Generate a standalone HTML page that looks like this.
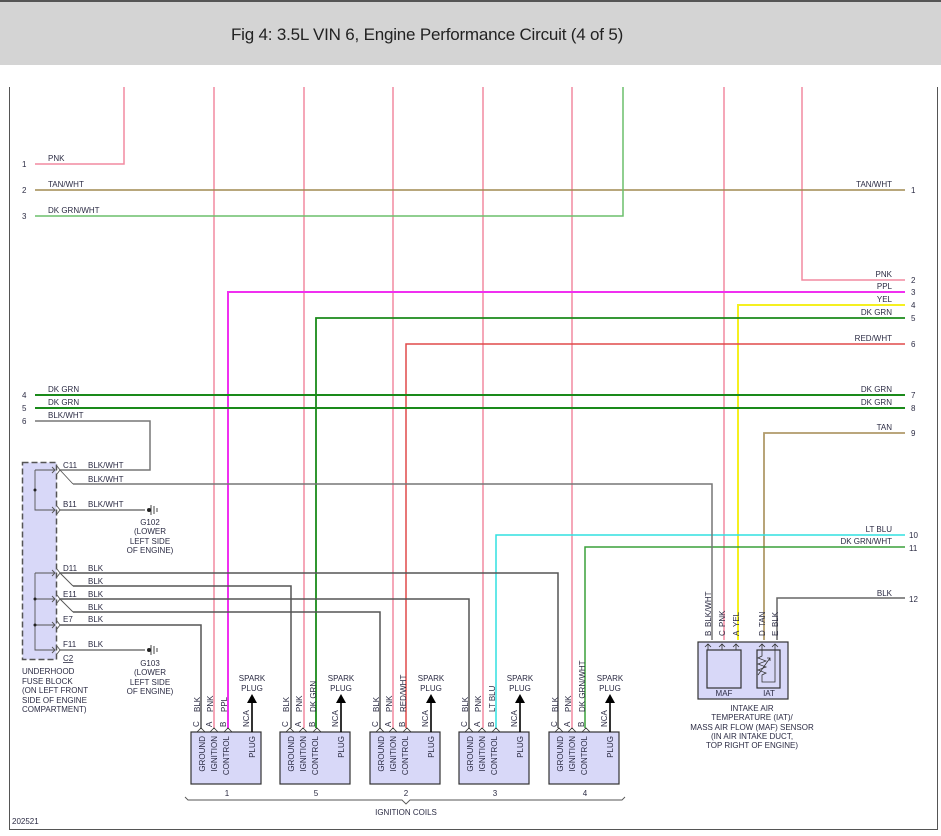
<!DOCTYPE html>
<html><head><meta charset="utf-8"><style>
html,body{margin:0;padding:0;background:#fff;}
body{width:941px;height:836px;overflow:hidden;position:relative;font-family:"Liberation Sans",sans-serif;}
.hdr{position:absolute;left:0;top:0;width:941px;height:65px;background:#d4d4d4;border-top:2px solid #555;box-sizing:border-box;}
.hdr span{position:absolute;left:231px;top:23px;font-size:17px;color:#222;letter-spacing:-0.2px;}
svg{position:absolute;left:0;top:0;}
text{font-family:"Liberation Sans",sans-serif;font-size:8px;fill:#2c2c44;}
</style></head><body>
<div class="hdr"><span>Fig 4: 3.5L VIN 6, Engine Performance Circuit (4 of 5)</span></div>
<svg width="941" height="836" viewBox="0 0 941 836">
<defs>
<g id="coil">
 <rect x="0" y="732" width="70" height="52" fill="#d8d8f8" stroke="#333" stroke-width="1.2"/>
 <path d="M6 732 l4 -4 4 4 M19 732 l4 -4 4 4 M33 732 l4 -4 4 4" fill="none" stroke="#333" stroke-width="0.8"/>
 <text transform="translate(14,736) rotate(-90)" text-anchor="end">GROUND</text>
 <text transform="translate(26,736) rotate(-90)" text-anchor="end">IGNITION</text>
 <text transform="translate(38,736) rotate(-90)" text-anchor="end">CONTROL</text>
 <text transform="translate(64,736) rotate(-90)" text-anchor="end">PLUG</text>
 <text transform="translate(8,727) rotate(-90)" text-anchor="start">C</text>
 <text transform="translate(21,727) rotate(-90)" text-anchor="start">A</text>
 <text transform="translate(35,727) rotate(-90)" text-anchor="start">B</text>
 <text transform="translate(58,727) rotate(-90)" text-anchor="start">NCA</text>
 <line x1="61" y1="732" x2="61" y2="702" stroke="#000" stroke-width="1.6"/>
 <path d="M56 703 L61 694 L66 703 Z" fill="#000"/>
 <text x="61" y="681" text-anchor="middle">SPARK</text>
 <text x="61" y="691" text-anchor="middle">PLUG</text>
</g>
</defs>
<!-- border -->
<path d="M9.5 87 V829.5 H937.5 V87" fill="none" stroke="#555" stroke-width="1"/>
<!-- wire numbers left -->
<g>
<text x="22" y="167">1</text><text x="22" y="193">2</text><text x="22" y="219">3</text>
<text x="22" y="398">4</text><text x="22" y="411">5</text><text x="22" y="424">6</text>
<text x="911" y="193">1</text><text x="911" y="283">2</text><text x="911" y="295">3</text>
<text x="911" y="308">4</text><text x="911" y="321">5</text><text x="911" y="347">6</text>
<text x="911" y="398">7</text><text x="911" y="411">8</text><text x="911" y="436">9</text>
<text x="909" y="538">10</text><text x="909" y="551">11</text><text x="909" y="602">12</text>
</g>
<g fill="none" stroke-width="1.5">
<!-- pink verticals -->
<path d="M35 164 H124 V87" stroke="#f28aa0"/>
<path d="M214 87 V728 M304 87 V728 M393 87 V728 M483 87 V728 M572 87 V728 M724 87 V640" stroke="#f28aa0"/>
<path d="M802 87 V280 H905" stroke="#f28aa0"/>
<path d="M35 190 H905" stroke="#a08a50"/>
<path d="M35 216 H623 V87" stroke="#6cbf6c"/>
<path d="M228 728 V292 H905" stroke="#f030f0" stroke-width="2"/>
<path d="M738 640 V305 H905" stroke="#f5f020" stroke-width="2"/>
<path d="M316 728 V318 H905" stroke="#1a8a1a" stroke-width="1.8"/>
<path d="M406 728 V344 H905" stroke="#e04a4a"/>
<path d="M35 395 H905 M35 408 H905" stroke="#1a8a1a" stroke-width="2"/>
<path d="M35 421 H150 V470 H60" stroke="#777"/>
<path d="M764 640 V433 H905" stroke="#b09a6a" stroke-width="1.8"/>
<path d="M496 728 V535 H905" stroke="#30e0e0"/>
<path d="M585 728 V547 H905" stroke="#3aa03a"/>
<path d="M777 640 V598 H905" stroke="#666"/>
<path d="M73 484 H712 V640" stroke="#777"/>
<path d="M60 510 H145" stroke="#777"/>
<path d="M60 573 H558 V728" stroke="#555"/>
<path d="M73 586 H291 V728" stroke="#555"/>
<path d="M60 599 H469 V728" stroke="#555"/>
<path d="M73 612 H380 V728" stroke="#555"/>
<path d="M60 625 H201 V728" stroke="#555"/>
<path d="M60 650 H145" stroke="#777"/>
</g>
<!-- wire labels -->
<g>
<text x="48" y="161">PNK</text><text x="48" y="187">TAN/WHT</text><text x="48" y="213">DK GRN/WHT</text>
<text x="48" y="392">DK GRN</text><text x="48" y="405">DK GRN</text><text x="48" y="418">BLK/WHT</text>
<g text-anchor="end">
<text x="892" y="187">TAN/WHT</text><text x="892" y="277">PNK</text><text x="892" y="289">PPL</text>
<text x="892" y="302">YEL</text><text x="892" y="315">DK GRN</text><text x="892" y="341">RED/WHT</text>
<text x="892" y="392">DK GRN</text><text x="892" y="405">DK GRN</text><text x="892" y="430">TAN</text>
<text x="892" y="532">LT BLU</text><text x="892" y="544">DK GRN/WHT</text><text x="892" y="596">BLK</text>
</g>
</g>
<!-- fuse block -->
<rect x="22.5" y="462.5" width="34" height="197" fill="#d8d8f8" stroke="#555" stroke-width="1.5" stroke-dasharray="6,3"/>
<g fill="none" stroke="#555" stroke-width="0.9">
<path d="M35 470 H55 M35 470 V510 H55 M35 573 V650 H55 M35 573 H55 M35 599 H55 M35 625 H55"/>
<path d="M52 467 l3 3 -3 3 M52 507 l3 3 -3 3 M52 570 l3 3 -3 3 M52 596 l3 3 -3 3 M52 622 l3 3 -3 3 M52 647 l3 3 -3 3"/>
<path d="M57 466 l3 4 -3 4 M57 506 l3 4 -3 4 M57 569 l3 4 -3 4 M57 595 l3 4 -3 4 M57 621 l3 4 -3 4 M57 646 l3 4 -3 4"/>
<path d="M60 470 L73 484 M60 573 L73 586 M60 599 L73 612"/>
</g>
<circle cx="35" cy="490" r="1.5" fill="#222"/><circle cx="35" cy="599" r="1.5" fill="#222"/><circle cx="35" cy="625" r="1.5" fill="#222"/>
<g>
<text x="63" y="468">C11</text><text x="88" y="468">BLK/WHT</text><text x="88" y="482">BLK/WHT</text>
<text x="63" y="507">B11</text><text x="88" y="507">BLK/WHT</text>
<text x="63" y="571">D11</text><text x="88" y="571">BLK</text><text x="88" y="584">BLK</text>
<text x="63" y="597">E11</text><text x="88" y="597">BLK</text><text x="88" y="610">BLK</text>
<text x="63" y="622">E7</text><text x="88" y="622">BLK</text>
<text x="63" y="647">F11</text><text x="88" y="647">BLK</text>
<text x="63" y="661" text-decoration="underline">C2</text>
<text x="22" y="674">UNDERHOOD</text><text x="22" y="684">FUSE BLOCK</text><text x="22" y="693">(ON LEFT FRONT</text><text x="22" y="703">SIDE OF ENGINE</text><text x="22" y="712">COMPARTMENT)</text>
<g text-anchor="middle">
<text x="150" y="525">G102</text><text x="150" y="534">(LOWER</text><text x="150" y="544">LEFT SIDE</text><text x="150" y="553">OF ENGINE)</text>
<text x="150" y="666">G103</text><text x="150" y="675">(LOWER</text><text x="150" y="685">LEFT SIDE</text><text x="150" y="694">OF ENGINE)</text>
</g>
</g>
<g stroke="#444" stroke-width="1" fill="none">
<path d="M151 505 V515 M154 506 V514 M157 508 V512 M151 645 V655 M154 646 V654 M157 648 V652"/>
</g>
<circle cx="149" cy="510" r="2" fill="#222"/><circle cx="149" cy="650" r="2" fill="#222"/>
<!-- coils -->
<use href="#coil" x="191"/><use href="#coil" x="280"/><use href="#coil" x="370"/><use href="#coil" x="459"/><use href="#coil" x="549"/>
<g>
<text transform="translate(200,712) rotate(-90)">BLK</text><text transform="translate(213,712) rotate(-90)">PNK</text><text transform="translate(227,712) rotate(-90)">PPL</text>
<text transform="translate(289,712) rotate(-90)">BLK</text><text transform="translate(302,712) rotate(-90)">PNK</text><text transform="translate(316,712) rotate(-90)">DK GRN</text>
<text transform="translate(379,712) rotate(-90)">BLK</text><text transform="translate(392,712) rotate(-90)">PNK</text><text transform="translate(406,712) rotate(-90)">RED/WHT</text>
<text transform="translate(468,712) rotate(-90)">BLK</text><text transform="translate(481,712) rotate(-90)">PNK</text><text transform="translate(495,712) rotate(-90)">LT BLU</text>
<text transform="translate(558,712) rotate(-90)">BLK</text><text transform="translate(571,712) rotate(-90)">PNK</text><text transform="translate(585,712) rotate(-90)">DK GRN/WHT</text>
<g text-anchor="middle">
<text x="227" y="796">1</text><text x="316" y="796">5</text><text x="406" y="796">2</text><text x="495" y="796">3</text><text x="585" y="796">4</text>
<text x="406" y="815">IGNITION COILS</text>
</g>
<text x="12" y="824">202521</text>
</g>
<path d="M185 797 l3 3 H402 l4 4 4 -4 H622 l3 -3" fill="none" stroke="#555" stroke-width="0.9"/>
<!-- MAF/IAT -->
<rect x="698" y="642" width="90" height="57" fill="#d8d8f8" stroke="#333" stroke-width="1.2"/>
<rect x="707" y="650" width="34" height="38" fill="#d8d8f8" stroke="#333" stroke-width="1.2"/>
<rect x="757" y="650" width="23" height="38" fill="#d8d8f8" stroke="#333" stroke-width="1.2"/>
<g fill="none" stroke="#333" stroke-width="0.8">
<path d="M708 650 V644 M722 650 V644 M736 650 V644 M705 647 l3 -3 3 3 M719 647 l3 -3 3 3 M733 647 l3 -3 3 3 M759 647 l3 -3 3 3 M772 647 l3 -3 3 3"/>
<path d="M762 644 V656 l-4 2 8 3 -8 3 8 3 -8 3 8 3 -4 2 V682 H775 V644"/>
<path d="M758 675 L770 658 M767 658 h3 v3"/>
</g>
<g>
<text transform="translate(711,636) rotate(-90)">B</text><text transform="translate(725,636) rotate(-90)">C</text><text transform="translate(739,636) rotate(-90)">A</text>
<text transform="translate(765,636) rotate(-90)">D</text><text transform="translate(778,636) rotate(-90)">E</text>
<text transform="translate(711,627) rotate(-90)">BLK/WHT</text><text transform="translate(725,627) rotate(-90)">PNK</text><text transform="translate(739,627) rotate(-90)">YEL</text>
<text transform="translate(765,627) rotate(-90)">TAN</text><text transform="translate(778,627) rotate(-90)">BLK</text>
<g text-anchor="middle">
<text x="724" y="696">MAF</text><text x="769" y="696">IAT</text>
<text x="752" y="711">INTAKE AIR</text><text x="752" y="720">TEMPERATURE (IAT)/</text><text x="752" y="730">MASS AIR FLOW (MAF) SENSOR</text><text x="752" y="739">(IN AIR INTAKE DUCT,</text><text x="752" y="748">TOP RIGHT OF ENGINE)</text>
</g>
</g>
</svg>
</body></html>
